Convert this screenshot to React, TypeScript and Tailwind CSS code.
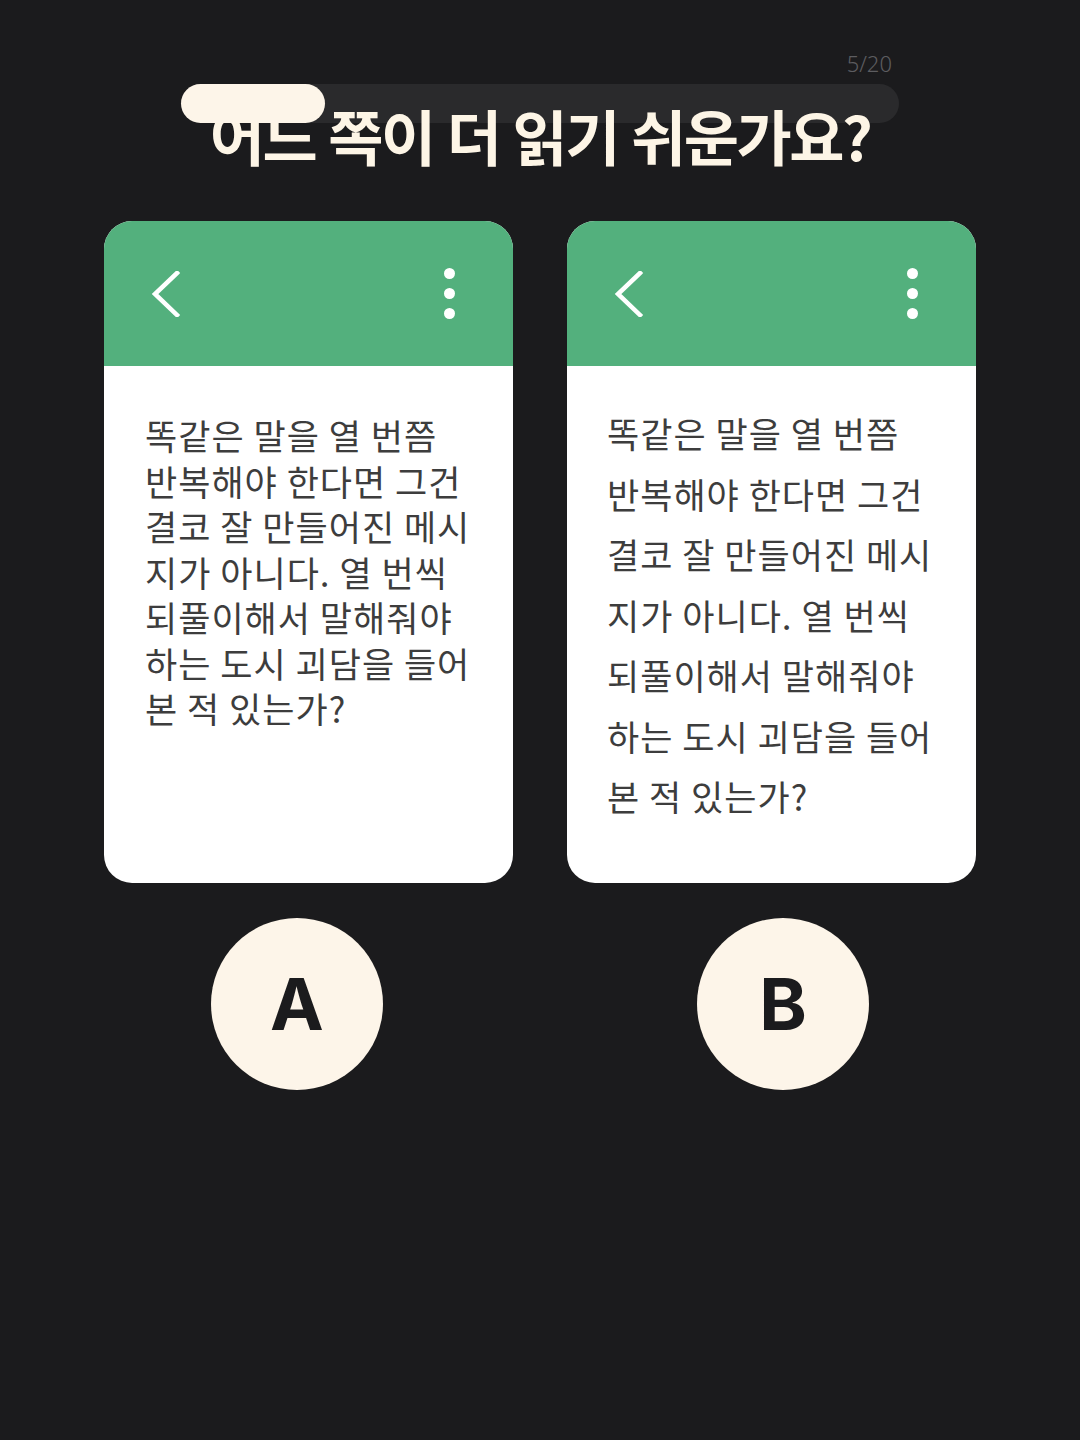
const lines = [
  "똑같은 말을 열 번쯤",
  "반복해야 한다면 그건",
  "결코 잘 만들어진 메시",
  "지가 아니다. 열 번씩",
  "되풀이해서 말해줘야",
  "하는 도시 괴담을 들어",
  "본 적 있는가?",
];

function PhoneCard({ loose }: { loose?: boolean }) {
  return (
    <div className="w-[409px] h-[662px] rounded-[28px] overflow-hidden bg-white flex flex-col">
      <div className="h-[145px] bg-[#53b07d] flex items-center justify-between pl-[47px] pr-[58px]">
        <svg width="30" height="46" viewBox="0 0 30 46" fill="none">
          <polyline points="26,2 4,23 26,44" stroke="white" strokeWidth="4.5" strokeLinecap="square" />
        </svg>
        <div className="flex flex-col gap-[9px]">
          <span className="w-[11px] h-[11px] rounded-full bg-white" />
          <span className="w-[11px] h-[11px] rounded-full bg-white" />
          <span className="w-[11px] h-[11px] rounded-full bg-white" />
        </div>
      </div>
      <div
        className={
          loose
            ? "pl-[40px] pt-[37px] text-[35px] leading-[60.5px] text-[#3d3d3d] tracking-[1px]"
            : "pl-[41px] pt-[46px] text-[35px] leading-[45.5px] text-[#3d3d3d] tracking-[1px]"
        }
      >
        {lines.map((l) => (
          <div key={l} className="whitespace-nowrap">{l}</div>
        ))}
      </div>
    </div>
  );
}

function Choice({ label }: { label: string }) {
  return (
    <div className="w-[172px] h-[172px] rounded-full bg-[#fdf5e9] flex items-center justify-center">
      <span className="text-[72px] font-bold text-[#1b1b1d] leading-none font-['Inter',sans-serif]">{label}</span>
    </div>
  );
}

export default function App() {
  return (
    <div className="w-full min-h-[1440px] bg-[#1b1b1d] font-['Noto_Sans_CJK_KR','Noto_Sans',sans-serif]">
      <div className="w-[718px] mx-auto pt-[50px]">
        <div className="text-right pr-[7px] text-[22px] leading-[26px] font-light text-[#5d5d60] font-['Noto_Sans',sans-serif]">5/20</div>
        <div className="relative mt-[8px] h-[39px] rounded-full bg-[#2a2a2c]">
          <div className="absolute left-0 top-0 z-20 h-[39px] w-[144px] rounded-full bg-[#fdf5e9]" />
        </div>
      </div>
      <h1 className="relative z-10 -mt-[18px] text-center text-[60px] leading-none font-bold tracking-[-2.5px] [word-spacing:2px] text-[#fdf5e6]">
        어느 쪽이 더 읽기 쉬운가요?
      </h1>
      <div className="mt-[56px] flex justify-center gap-[54px]">
        <PhoneCard />
        <PhoneCard loose />
      </div>
      <div className="mt-[35px] flex justify-center gap-[314px]">
        <Choice label="A" />
        <Choice label="B" />
      </div>
    </div>
  );
}
